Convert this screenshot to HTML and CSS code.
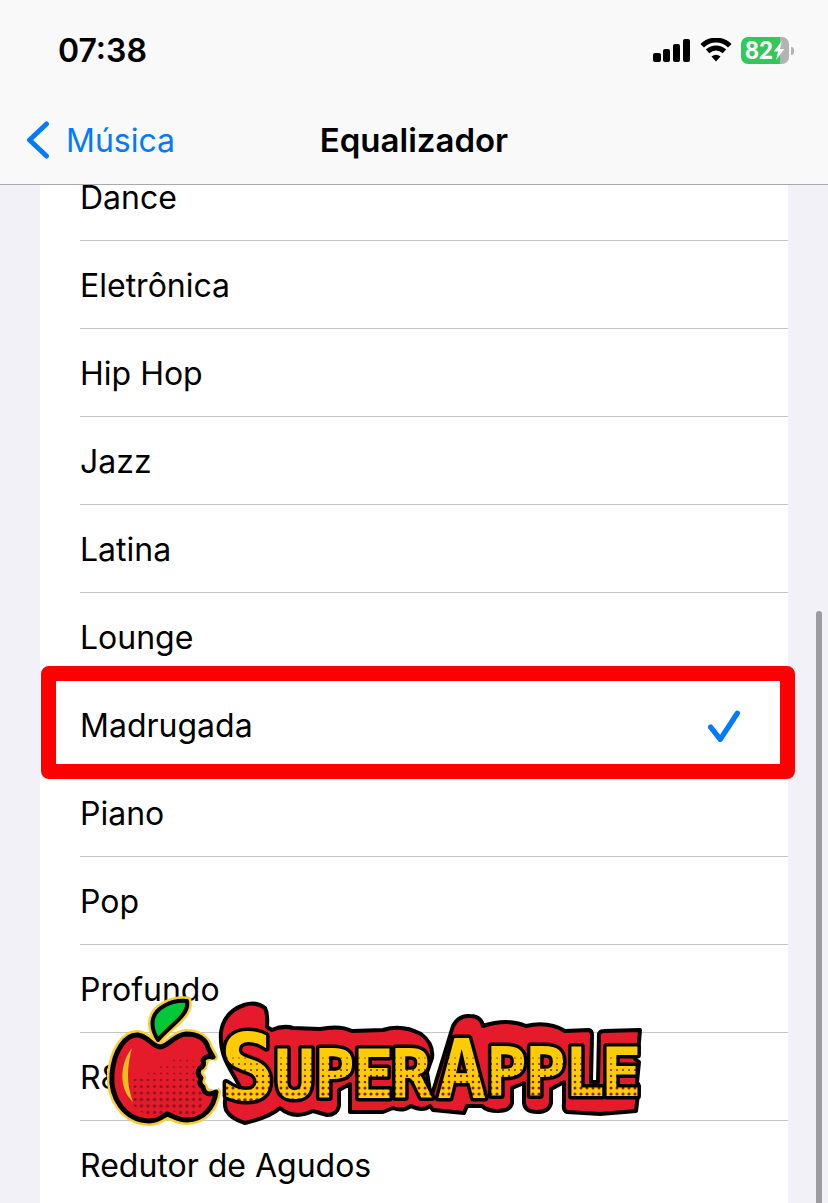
FILE: index.html
```html
<!DOCTYPE html>
<html lang="pt-BR">
<head>
    <meta charset="UTF-8">
    <meta name="viewport" content="width=device-width, initial-scale=1">
    <title>Equalizador</title>
    <link rel="stylesheet" href="styles.css">
</head>
<body>
    <div class="screen">
        <header>
            <div class="status-bar">
                <span class="time">07:38</span>
                <div class="status-icons">
                    <svg class="signal" viewBox="0 0 38 24" aria-hidden="true">
                        <rect x="0" y="15" width="8" height="9" rx="2" />
                        <rect x="10" y="11" width="7" height="13" rx="2" />
                        <rect x="20" y="6" width="7" height="18" rx="2" />
                        <rect x="30" y="1" width="7" height="23" rx="2" />
                    </svg>
                    <svg class="wifi" viewBox="0 0 32 24" aria-hidden="true">
                        <path d="M2.200 7.800C10 0.200 22 0.200 29.800 7.800" />
                        <path d="M7.600 13.400C12.600 8.800 19.400 8.800 24.400 13.400" />
                        <path class="wifi-dot" d="M11.500 18.600Q16 14.800 20.500 18.600L16 23.500Z" />
                    </svg>
                    <div class="battery">
                        <span class="battery-level">82</span>
                        <svg viewBox="0 0 12 20" aria-hidden="true">
                            <path d="M9 0L0.500 11H5L3 20L11.500 8.500H7Z" />
                        </svg>
                    </div>
                </div>
            </div>
            <nav>
                <a class="back" href="#">
                    <svg viewBox="0 0 24 40" aria-hidden="true">
                        <path d="M20.500 4L3.500 20L20.500 36" />
                    </svg>
                    Música
                </a>
                <h1>Equalizador</h1>
            </nav>
        </header>

        <main>
            <form class="list">
                <label class="row"><input type="radio" name="eq"><span>Dance</span></label>
                <label class="row"><input type="radio" name="eq"><span>Eletrônica</span></label>
                <label class="row"><input type="radio" name="eq"><span>Hip Hop</span></label>
                <label class="row"><input type="radio" name="eq"><span>Jazz</span></label>
                <label class="row"><input type="radio" name="eq"><span>Latina</span></label>
                <label class="row"><input type="radio" name="eq"><span>Lounge</span></label>
                <label class="row highlight">
                    <input type="radio" name="eq" checked><span>Madrugada</span>
                    <svg class="check" viewBox="0 0 30 30" aria-hidden="true">
                        <path d="M2.500 16L11.500 27.500L27.500 3" />
                    </svg>
                </label>
                <label class="row"><input type="radio" name="eq"><span>Piano</span></label>
                <label class="row"><input type="radio" name="eq"><span>Pop</span></label>
                <label class="row"><input type="radio" name="eq"><span>Profundo</span></label>
                <label class="row"><input type="radio" name="eq"><span>R&amp;B</span></label>
                <label class="row"><input type="radio" name="eq"><span>Redutor de Agudos</span></label>
            </form>
        </main>

        <svg class="logo" viewBox="104 993 542 136" role="img" aria-label="Super Apple">
            <defs>
                <!-- one column of dots, growing towards the bottom -->
                <pattern id="dots" patternUnits="userSpaceOnUse" x="2" y="995" width="6" height="132">
                    <rect width="6" height="132" fill="#ffcb05" />
                    <g fill="#8c1d12">
                        <circle cx="3" cy="63" r="0.700" />
                        <circle cx="3" cy="69" r="0.900" />
                        <circle cx="3" cy="75" r="1" />
                        <circle cx="3" cy="81" r="1.200" />
                        <circle cx="3" cy="87" r="1.300" />
                        <circle cx="3" cy="93" r="1.500" />
                        <circle cx="3" cy="99" r="1.600" />
                        <circle cx="3" cy="105" r="1.800" />
                        <circle cx="3" cy="111" r="1.900" />
                    </g>
                </pattern>
                <pattern id="apple-dots" patternUnits="userSpaceOnUse" x="2" y="995" width="6.500" height="132">
                    <g fill="#8c1420">
                        <circle cx="3" cy="65.500" r="0.900" />
                        <circle cx="3" cy="72" r="1" />
                        <circle cx="3" cy="78.500" r="1.100" />
                        <circle cx="3" cy="85" r="1.300" />
                        <circle cx="3" cy="91.500" r="1.500" />
                        <circle cx="3" cy="98" r="1.600" />
                        <circle cx="3" cy="104.500" r="1.700" />
                        <circle cx="3" cy="111" r="1.800" />
                        <circle cx="3" cy="117.500" r="1.700" />
                    </g>
                </pattern>
                <path id="fruit" d="M160 1047C168 1047 174 1035 186 1034C198 1034 206 1039 208 1048L213 1057Q206 1055 203 1060Q205 1066 200 1068Q196 1073 201 1078Q198 1084 203 1087Q204 1094 210 1094L216 1092C214 1107 204 1120 187 1120C177 1120 172 1115 167 1114C162 1117 158 1121 149 1121C124 1120 110 1097 112 1074C114 1050 126 1034 138 1035C148 1036 151 1046 160 1047Z" />
                <path id="leaf" d="M158 1040C149 1026 151 1013 164 1006Q174 1000 187 1001C190 1015 169 1026 158 1040Z" />
            </defs>

            <g stroke-linejoin="round">
                <use href="#fruit" fill="#f7cf35" stroke="#f7cf35" stroke-width="10" />
                <use href="#leaf" fill="#f7cf35" stroke="#f7cf35" stroke-width="9" />
                <path d="M218 1061L211 1060Q207 1064 207 1069Q203 1073 207 1077Q205 1082 208 1086Q210 1091 218 1089Z" fill="#fff" />
                <use href="#fruit" fill="#e51b2b" stroke="#000" stroke-width="5" />
                <use href="#leaf" fill="#00c838" stroke="#000" stroke-width="4" />
                <path d="M136 1078H148V1072H160V1064H172V1056H192L196 1070L198 1088L204 1096Q202 1115 190 1118L170 1110L154 1117Q130 1112 124 1085L136 1078Z" fill="url(#apple-dots)" />
                <path d="M132 1048C120 1063 118 1088 133 1102C126 1083 127 1067 132 1048Z" fill="#e8bd20" />
            </g>

            <path class="plate" d="M221 1032Q224 1012 244 1005Q256 1001 265 1008Q268 1014 267 1027L272 1030Q283 1025 293 1028L320 1029Q340 1025 352 1031L383 1030Q402 1024 421 1034Q434 1044 432 1058L427 1072L431 1098L453 1026Q459 1015 470 1016Q481 1016 483 1026Q507 1018 526 1026Q548 1021 565 1031L589 1030Q592 1031 592 1035L591 1082H598L599 1034Q600 1031 604 1031L640 1030L638 1054L635 1059L639 1062L637 1082L639 1086L636 1111L600 1114L567 1112Q563 1111 564 1103V1082L551 1089V1103Q549 1112 537 1112Q525 1112 524 1103V1083L512 1088V1103Q510 1111 498 1111Q487 1111 482 1106L467 1106L464 1113L433 1110L430 1106Q423 1112 411 1106Q402 1112 393 1108L383 1112L350 1112V1084L339 1090V1106Q337 1115 327 1115L313 1111Q294 1120 280 1108Q270 1117 245 1123Q231 1119 226 1110Q222 1097 232 1090L240 1087C232 1070 219 1058 221 1032Z" />
            <text class="brand"><tspan class="big" x="220" y="1100">S</tspan><tspan x="274 314 353 391" y="1098">UPER</tspan> <tspan class="mid" x="437" y="1098">A</tspan><tspan x="486 525 564 601" y="1096">PPLE</tspan></text>
        </svg>

        <div class="scrollbar"></div>
    </div>
</body>
</html>
```
FILE: styles.css
```css
* {
    box-sizing: border-box;
    margin: 0;
    padding: 0;
}

body {
    font-family: Inter, "Liberation Sans", sans-serif;
    font-size: 32px;
    color: #000;
    background-color: #f2f1f7;
}

.screen {
    position: relative;
    height: 100vh;
    overflow: hidden;
}

header {
    position: relative;
    z-index: 2;
    background-color: #f9f9f9;
    border-bottom: 1px solid #a9a9ac;
}

.status-bar {
    display: flex;
    justify-content: space-between;
    align-items: center;
    height: 100px;
    padding: 0 34px 0 58px;
}

.time {
    font-weight: 600;
}

.status-icons {
    display: flex;
    align-items: center;
    gap: 9px;
}

.signal {
    width: 38px;
    height: 24px;
}

.wifi {
    width: 32px;
    height: 24px;
    fill: none;
    stroke: #000;
    stroke-width: 5;
}

.wifi .wifi-dot {
    fill: #000;
    stroke: none;
}

.battery {
    position: relative;
    display: flex;
    align-items: center;
    width: 48px;
    height: 27px;
    margin-right: 5px;
    padding-left: 4px;
    border-radius: 7px;
    background: linear-gradient(to right, #34c759 82%, #b3b3b3 82%);
}

.battery::after {
    content: "";
    position: absolute;
    right: -5px;
    top: 10px;
    width: 3px;
    height: 8px;
    border-radius: 0 4px 4px 0;
    background-color: #b3b3b3;
}

.battery-level {
    font-family: Lato, sans-serif;
    font-size: 24px;
    font-weight: 900;
    line-height: 24px;
    color: #fff;
}

.battery svg {
    width: 12px;
    height: 19px;
    fill: #fff;
}

nav {
    display: grid;
    grid-template-columns: 1fr auto 1fr;
    align-items: center;
    height: 84px;
    padding: 0 26px 4px;
}

.back {
    display: flex;
    align-items: center;
    gap: 16px;
    color: #007aff;
    text-decoration: none;
}

.back svg {
    width: 24px;
    height: 40px;
    fill: none;
    stroke: #007aff;
    stroke-width: 5;
    stroke-linecap: round;
    stroke-linejoin: round;
}

h1 {
    font-size: 33px;
    font-weight: 600;
}

/* the list is scrolled a little under the header */
.list {
    margin: -32px 40px 0;
    background-color: #fff;
}

.row {
    position: relative;
    display: flex;
    justify-content: space-between;
    align-items: center;
    height: 88px;
    margin-left: 40px;
    padding: 2px 48px 0 0;
    border-bottom: 1px solid #c6c6c8;
}

.row input {
    position: absolute;
    appearance: none;
}

.check {
    width: 32px;
    height: 32px;
    fill: none;
    stroke: #007aff;
    stroke-width: 5;
    stroke-linecap: round;
    stroke-linejoin: round;
}

.highlight::after {
    content: "";
    position: absolute;
    top: -15px;
    right: -7px;
    bottom: -11px;
    left: -39px;
    border: 15px solid #f00;
    border-radius: 8px;
}

.logo {
    position: absolute;
    left: 104px;
    top: 993px;
    width: 542px;
    height: 136px;
}

.plate {
    fill: #e51b2b;
    stroke: #000;
    stroke-width: 4;
    stroke-linejoin: round;
}

.brand {
    font-family: "DejaVu Sans Mono", monospace;
    font-size: 68px;
    font-weight: bold;
    fill: url(#dots);
    stroke: #000;
    stroke-width: 7;
    stroke-linejoin: round;
    paint-order: stroke;
}

.brand .big {
    font-size: 92px;
}

.brand .mid {
    font-size: 82px;
}

.scrollbar {
    position: absolute;
    top: 611px;
    right: 6px;
    bottom: -6px;
    width: 6px;
    border-radius: 3px;
    background-color: #9b9ba0;
}
```
